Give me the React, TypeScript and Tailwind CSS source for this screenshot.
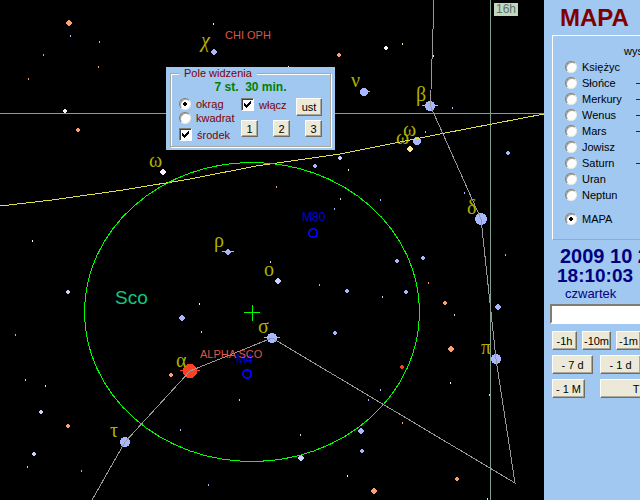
import type { ReactNode } from "react";
import clsx from "clsx";

const BLUE = "#a8b8ff";
const PALE = "#c8d4ff";
const WHITE = "#fff0ff";
const ORANGE = "#ffa070";
const RED = "#ff4020";
const YELLOW = "#ffe8a0";

type Star = { x: number; y: number; r: number; color: string; left?: number; right?: number };

const stars: Star[] = [
  { x: 69, y: 23, r: 3, color: ORANGE },
  { x: 65, y: 111, r: 2, color: WHITE },
  { x: 78, y: 130, r: 2, color: ORANGE },
  { x: 163, y: 172, r: 3, color: WHITE },
  { x: 214, y: 52, r: 3, color: BLUE },
  { x: 339, y: 55, r: 2, color: ORANGE },
  { x: 386, y: 48, r: 2, color: WHITE },
  { x: 364, y: 92, r: 4, color: BLUE, right: 6 },
  { x: 430, y: 106, r: 5, color: BLUE, left: 8, right: 8 },
  { x: 417, y: 141, r: 4, color: BLUE },
  { x: 410, y: 149, r: 3, color: YELLOW },
  { x: 508, y: 153, r: 2, color: BLUE },
  { x: 340, y: 158, r: 2, color: PALE },
  { x: 315, y: 166, r: 2, color: BLUE },
  { x: 68, y: 292, r: 2, color: PALE },
  { x: 182, y: 318, r: 3, color: BLUE },
  { x: 171, y: 375, r: 2, color: ORANGE },
  { x: 41, y: 412, r: 2, color: PALE },
  { x: 68, y: 426, r: 2, color: ORANGE },
  { x: 34, y: 454, r: 2, color: PALE },
  { x: 125, y: 442, r: 5, color: BLUE },
  { x: 228, y: 252, r: 3, color: BLUE, left: 6, right: 6 },
  { x: 278, y: 281, r: 3, color: PALE },
  { x: 347, y: 291, r: 2, color: BLUE },
  { x: 335, y: 333, r: 2, color: BLUE },
  { x: 272, y: 338, r: 5, color: BLUE, left: 8, right: 8 },
  { x: 190, y: 371, r: 7, color: RED, left: 10, right: 10 },
  { x: 301, y: 458, r: 3, color: PALE },
  { x: 481, y: 219, r: 6, color: BLUE },
  { x: 423, y: 258, r: 2, color: BLUE },
  { x: 397, y: 261, r: 2, color: BLUE },
  { x: 406, y: 292, r: 2, color: BLUE },
  { x: 445, y: 303, r: 2, color: ORANGE },
  { x: 498, y: 307, r: 3, color: BLUE },
  { x: 451, y: 349, r: 3, color: ORANGE },
  { x: 402, y: 367, r: 2, color: RED },
  { x: 496, y: 359, r: 5, color: BLUE },
  { x: 361, y: 431, r: 3, color: BLUE },
  { x: 362, y: 451, r: 2, color: BLUE },
  { x: 457, y: 479, r: 2, color: ORANGE },
  { x: 374, y: 491, r: 3, color: ORANGE },
];

// faint stars, one pixel wide
const faint: [number, number, string][] = [
  [70, 35, BLUE], [99, 41, BLUE], [43, 54, ORANGE], [98, 66, ORANGE], [28, 78, ORANGE],
  [213, 23, WHITE], [288, 66, WHITE], [402, 43, YELLOW], [433, 55, WHITE], [452, 107, BLUE],
  [425, 131, ORANGE], [348, 169, YELLOW], [32, 240, WHITE], [15, 334, ORANGE], [199, 303, WHITE],
  [25, 379, PALE], [45, 385, YELLOW], [27, 466, PALE], [81, 470, ORANGE], [180, 429, BLUE],
  [276, 186, ORANGE], [340, 198, PALE], [334, 208, BLUE], [270, 261, PALE], [319, 284, BLUE],
  [201, 331, PALE], [239, 399, PALE], [300, 434, PALE], [347, 475, WHITE], [208, 484, BLUE],
  [380, 199, BLUE], [464, 192, BLUE], [428, 282, ORANGE], [505, 254, BLUE], [382, 296, PALE],
  [454, 314, PALE], [450, 382, WHITE], [380, 389, BLUE], [368, 399, BLUE], [402, 422, ORANGE],
  [489, 394, YELLOW], [487, 498, YELLOW],
];

const greek: [string, number, number][] = [
  ["χ", 201, 47], ["ν", 351, 87], ["β", 416, 101], ["ω", 403, 136], ["ω", 396, 144],
  ["ω", 149, 167], ["δ", 467, 214], ["π", 481, 354], ["α", 176, 367], ["τ", 110, 437],
  ["ρ", 214, 247], ["ο", 264, 276], ["σ", 258, 333],
];

const planets = [
  { name: "Księżyc", mark: false },
  { name: "Słońce", mark: true },
  { name: "Merkury", mark: true },
  { name: "Wenus", mark: true },
  { name: "Mars", mark: true },
  { name: "Jowisz", mark: false },
  { name: "Saturn", mark: true },
  { name: "Uran", mark: false },
  { name: "Neptun", mark: false },
];

// small discs are built from bars so that they keep their cut corners
function Disc({ x, y, r, color, left, right }: Star) {
  return (
    <g fill={color}>
      {r === 2 && <path d={`M${x - 1} ${y - 2}h2v1h1v2h-1v1h-2v-1h-1v-2h1z`} />}
      {r === 3 && <path d={`M${x - 1} ${y - 3}h2v1h1v1h1v2h-1v1h-1v1h-2v-1h-1v-1h-1v-2h1v-1h1z`} />}
      {r > 3 && <circle cx={x} cy={y} r={r} />}
      {left && <path d={`M${x - left} ${y - 1}h${left}v1h${-left}zM${x - left + 3} ${y}h${left}v1h${-left}z`} />}
      {right && <path d={`M${x} ${y - 1}h${right}v1h${-right}zM${x - 3} ${y}h${right}v1h${-right}z`} />}
    </g>
  );
}

function SkyMap() {
  return (
    <svg className="absolute inset-0 h-full w-full" shapeRendering="crispEdges">
      {faint.map(([x, y, color]) => (
        <rect key={`${x}-${y}`} x={x} y={y} width="1" height="2" fill={color} />
      ))}
      {stars.map((s) => (
        <Disc key={`${s.x}-${s.y}`} {...s} />
      ))}

      <g fill="#b0b000" fontSize="20" fontFamily="'Liberation Serif', serif">
        {greek.map(([letter, x, y]) => (
          <text key={`${x}-${y}`} x={x} y={y} fontStyle={letter === "χ" ? "italic" : "normal"}>
            {letter}
          </text>
        ))}
      </g>

      {/* equatorial grid */}
      <rect x="0" y="113" width="100%" height="1" fill="#80a090" />
      <rect x="490" y="0" width="1" height="100%" fill="#80a090" />

      {/* ecliptic */}
      <path d="M0 206L52 200L123 190L190 179L256 166L340 154L440 134L544 114" fill="none" stroke="#e0e040" />

      {/* Scorpius */}
      <path
        d="M434 0L431 90L430 105L481 219L496 359L515 483L272 338L190 371L125 442L92 500"
        fill="none"
        stroke="#989898"
      />

      <g fill="none" stroke="#00ff00">
        <ellipse cx="252" cy="312" rx="167.5" ry="149.5" />
        <path d="M244 312.5h16M252.5 305v16" />
      </g>

      <g fontFamily="'Liberation Sans', sans-serif" fontSize="12" fill="#0000e0">
        <text x="302" y="221">M80</text>
        <text x="236" y="363">M4</text>
      </g>
      <g fontFamily="'Liberation Sans', sans-serif" fontSize="11" fill="#d85848">
        <text x="225" y="39">CHI OPH</text>
        <text x="200" y="358">ALPHA SCO</text>
      </g>
      <g fill="none" stroke="#0000ff" strokeWidth="2">
        <circle cx="313" cy="233" r="4" />
        <circle cx="247" cy="374" r="4" />
      </g>
      <text x="115" y="304" fontFamily="'Liberation Sans', sans-serif" fontSize="19" fill="#10c880">
        Sco
      </text>
    </svg>
  );
}

function Radio({ name, label, checked }: { name: string; label: string; checked?: boolean }) {
  return (
    <label className="flex items-center gap-[5px]">
      <input
        type="radio"
        name={name}
        defaultChecked={checked}
        className="h-3 w-3 shrink-0 appearance-none rounded-full border border-t-[#807c70] border-r-[#f0ece0] border-b-[#f0ece0] border-l-[#807c70] bg-white shadow-[inset_1px_1px_0_#a8a498] checked:bg-[radial-gradient(circle,#000_2px,#fff_2px)]"
      />
      {label}
    </label>
  );
}

function Checkbox({ label }: { label: string }) {
  return (
    <label className="flex items-center gap-[5px]">
      <span className="grid shrink-0">
        <input
          type="checkbox"
          defaultChecked
          className="peer col-start-1 row-start-1 h-[13px] w-[13px] appearance-none border border-t-[#807c70] border-r-white border-b-white border-l-[#807c70] bg-white shadow-[inset_1px_1px_0_#404040]"
        />
        <svg className="pointer-events-none invisible col-start-1 row-start-1 peer-checked:visible" width="13" height="13" shapeRendering="crispEdges">
          <path d="M3 5h1v1h1v1h1v-1h1v-1h1v-1h1v-1h1v3h-1v1h-1v1h-1v1h-1v1h-1v-1h-1v-1h-1z" fill="#000" />
        </svg>
      </span>
      {label}
    </label>
  );
}

function Button({ children, className }: { children: ReactNode; className?: string }) {
  return (
    <button
      type="button"
      className={clsx(
        "shrink-0 border border-t-white border-r-[#706c60] border-b-[#706c60] border-l-white bg-[#ece9d8] text-center text-black shadow-[inset_-1px_-1px_0_#aca899]",
        className,
      )}
    >
      {children}
    </button>
  );
}

function FieldOfView() {
  return (
    <div className="absolute top-[67px] left-[166px] h-[83px] w-[169px] bg-[#a0c8f0] px-1 text-[11px] leading-3 text-[#800000]">
      <fieldset className="h-20 border border-[#aca899] px-2 shadow-[inset_1px_1px_0_#fff,1px_1px_0_#fff]">
        <legend className="bg-[#a0c8f0] px-[5px]">Pole widzenia</legend>
        <p className="text-center text-xs leading-4 font-bold whitespace-pre text-[#008000]">7 st.  30 min.</p>
        <div className="flex justify-between pt-[3px]">
          <div className="flex flex-col gap-[2px]">
            <Radio name="shape" label="okrąg" checked />
            <Radio name="shape" label="kwadrat" />
            <div className="pt-[2px]">
              <Checkbox label="środek" />
            </div>
          </div>
          <div className="flex w-[81px] flex-col gap-1">
            <div className="flex items-start justify-between">
              <Checkbox label="włącz" />
              <Button className="h-[18px] w-[26px]">ust</Button>
            </div>
            <div className="flex justify-between">
              <Button className="h-[17px] w-[17px]">1</Button>
              <Button className="h-[17px] w-[17px]">2</Button>
              <Button className="h-[17px] w-[17px]">3</Button>
            </div>
          </div>
        </div>
      </fieldset>
    </div>
  );
}

function Sidebar() {
  return (
    <aside className="w-24 shrink-0 overflow-hidden bg-[#a0c8f0] text-[11px] leading-4 text-black">
      <div className="w-48 pl-2">
        <h1 className="pt-[6px] pl-2 text-2xl leading-6 font-bold text-[#800000]">MAPA</h1>
        <div className="mt-[5px] h-[205px] border border-t-white border-b-[#aca899] border-l-white pt-[7px] pl-3">
          <p className="pl-[59px]">wys</p>
          {planets.map((p) => (
            <div key={p.name} className="flex items-center">
              <div className="w-[71px]">
                <Radio name="object" label={p.name} />
              </div>
              {p.mark && <span className="h-px w-3 bg-[#800000]" />}
            </div>
          ))}
          <div className="pt-2">
            <Radio name="object" label="MAPA" checked />
          </div>
        </div>
        <div className="pt-[6px] font-bold whitespace-nowrap text-[#000080]">
          <p className="pl-2 text-[20px] leading-5">2009 10 2</p>
          <p className="pl-[5px] text-[19px] leading-5">18:10:03</p>
        </div>
        <p className="pl-[13px] text-[13px] leading-4 text-[#000080]">czwartek</p>
        <input
          type="text"
          aria-label="Opis"
          className="mt-[2px] -ml-[2px] block h-5 w-full border-2 border-t-[#807c70] border-r-white border-b-white border-l-[#807c70] bg-white px-1 outline-none"
        />
        <div className="flex flex-col gap-[5px] pt-[7px] whitespace-nowrap">
          <div className="flex gap-[5px]">
            <Button className="h-[19px] w-[25px]">-1h</Button>
            <Button className="h-[19px] w-[29px]">-10m</Button>
            <Button className="h-[19px] w-[25px]">-1m</Button>
          </div>
          <div className="flex gap-[7px]">
            <Button className="h-[19px] w-[41px]">- 7 d</Button>
            <Button className="h-[19px] w-[41px]">- 1 d</Button>
          </div>
          <div className="flex gap-[15px]">
            <Button className="h-[19px] w-[33px]">- 1 M</Button>
            <Button className="h-[19px] w-[72px]">T</Button>
          </div>
        </div>
      </div>
    </aside>
  );
}

export default function App() {
  return (
    <div className="flex min-h-screen bg-black font-['Liberation_Sans',sans-serif]">
      <main className="relative flex-1 overflow-hidden">
        <SkyMap />
        <span className="absolute top-[3px] left-[494px] bg-[#c0d8c0] px-[2px] text-xs leading-[13px] text-[#60706a]">16h</span>
        <FieldOfView />
      </main>
      <Sidebar />
    </div>
  );
}
